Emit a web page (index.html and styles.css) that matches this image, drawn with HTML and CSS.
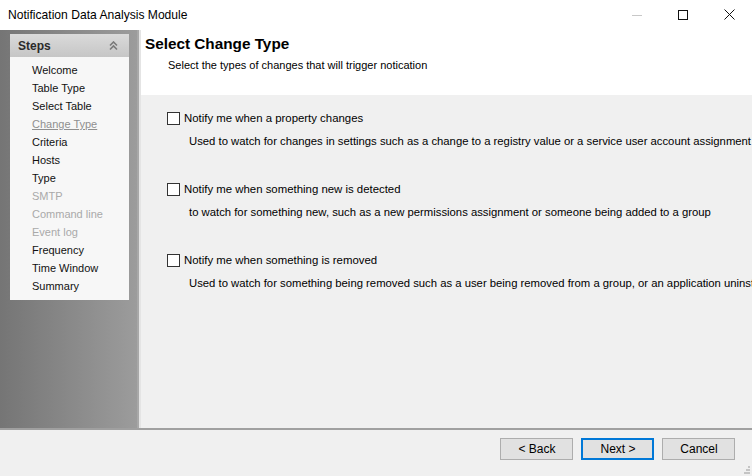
FILE: index.html
```html
<!DOCTYPE html>
<html lang="en">
<head>
  <meta charset="UTF-8" />
  <title>Notification Data Analysis Module</title>
  <link rel="stylesheet" href="styles.css">
</head>
<body>
  <div class="window">
    <div class="titlebar">
      <span class="title">Notification Data Analysis Module</span>
      <div class="controls">
        <span class="ctl"><svg width="10" height="10" viewBox="0 0 10 10"><line x1="0" y1="5.5" x2="10" y2="5.5" stroke="#c8c8c8" stroke-width="1"/></svg></span>
        <span class="ctl"><svg width="10" height="10" viewBox="0 0 10 10"><rect x="0.5" y="0.5" width="9" height="9" fill="none" stroke="#111" stroke-width="1"/></svg></span>
        <span class="ctl"><svg width="11" height="11" viewBox="0 0 11 11"><path d="M0.5 0.5 L10.5 10.5 M10.5 0.5 L0.5 10.5" stroke="#111" stroke-width="1"/></svg></span>
      </div>
    </div>

    <div class="middle">
      <div class="sidebar">
        <div class="steps">
          <div class="steps-head">
            <span>Steps</span>
            <svg width="9" height="10" viewBox="0 0 9 10"><path d="M1 4.5 L4.5 1 L8 4.5 M1 8.5 L4.5 5 L8 8.5" fill="none" stroke="#7a7a7a" stroke-width="1.6"/></svg>
          </div>
          <ul class="step-list">
            <li>Welcome</li>
            <li>Table Type</li>
            <li>Select Table</li>
            <li class="current">Change Type</li>
            <li>Criteria</li>
            <li>Hosts</li>
            <li>Type</li>
            <li class="off">SMTP</li>
            <li class="off">Command line</li>
            <li class="off">Event log</li>
            <li>Frequency</li>
            <li>Time Window</li>
            <li>Summary</li>
          </ul>
        </div>
      </div>

      <div class="main">
        <div class="page-head">
          <h1>Select Change Type</h1>
          <p>Select the types of changes that will trigger notication</p>
        </div>
        <div class="options">
          <div class="option">
            <label><span class="box"></span>Notify me when a property changes</label>
            <p>Used to watch for changes in settings such as a change to a registry value or a service user account assignment</p>
          </div>
          <div class="option">
            <label><span class="box"></span>Notify me when something new is detected</label>
            <p>to watch for something new, such as a new permissions assignment or someone being added to a group</p>
          </div>
          <div class="option">
            <label><span class="box"></span>Notify me when something is removed</label>
            <p>Used to watch for something being removed such as a user being removed from a group, or an application uninstalled</p>
          </div>
        </div>
      </div>
    </div>

    <div class="footer">
      <button>&lt; Back</button>
      <button class="default">Next &gt;</button>
      <button>Cancel</button>
      <svg class="grip" width="6" height="8" viewBox="0 0 6 8">
        <rect x="4" y="0" width="2" height="2" fill="#c4c4c4"/>
        <rect x="2" y="3" width="2" height="2" fill="#c4c4c4"/>
        <rect x="4" y="3" width="2" height="2" fill="#c4c4c4"/>
        <rect x="0" y="6" width="2" height="2" fill="#c4c4c4"/>
        <rect x="2" y="6" width="2" height="2" fill="#c4c4c4"/>
        <rect x="4" y="6" width="2" height="2" fill="#c4c4c4"/>
      </svg>
    </div>
  </div>
</body>
</html>
```

FILE: styles.css
```css
body {
  margin: 0;
  font-family: "Liberation Sans", Arial, sans-serif;
  color: #000;
  background: #f0f0f0;
}
.window {
  width: 752px;
  height: 476px;
  display: flex;
  flex-direction: column;
  overflow: hidden;
}
.titlebar {
  height: 30px;
  flex: none;
  background: #fff;
  display: flex;
  align-items: center;
  justify-content: space-between;
}
.title {
  font-size: 12.1px;
  padding-left: 8px;
  padding-bottom: 1px;
}
.controls {
  display: flex;
  padding-bottom: 1px;
}
.ctl {
  width: 46px;
  height: 30px;
  display: flex;
  align-items: center;
  justify-content: center;
}
.middle {
  flex: 1;
  display: flex;
  min-height: 0;
}
.sidebar {
  flex: none;
  width: 119px;
  background: linear-gradient(to right, #757575, #9c9c9c);
  border-right: 2px solid #a8a8a8;
  padding: 4px 8px 0 10px;
}
.steps {
  width: 119px;
  background: #f7f7f7;
}
.steps-head {
  height: 23px;
  background: linear-gradient(#dadada, #c6c6c6);
  display: flex;
  align-items: center;
  justify-content: space-between;
  padding: 0 11px 0 8px;
  font-size: 12px;
  font-weight: bold;
  color: #2a2a2a;
}
.step-list {
  list-style: none;
  margin: 0;
  padding: 4px 0 5px 22px;
  font-size: 11px;
  color: #111;
}
.step-list li {
  height: 18px;
  line-height: 18px;
}
.step-list li.off {
  color: #a9a9a9;
}
.step-list li.current {
  color: #8f8f8f;
  text-decoration: underline;
}
.main {
  flex: 1;
  display: flex;
  flex-direction: column;
  min-width: 0;
  border-left: 2px solid #e4e4e4;
}
.page-head {
  height: 65px;
  flex: none;
  background: #fff;
  padding-left: 4px;
}
.page-head h1 {
  margin: 0;
  padding-top: 5px;
  font-size: 15.3px;
  font-weight: bold;
  line-height: 17px;
}
.page-head p {
  margin: 7px 0 0 23px;
  font-size: 11px;
}
.options {
  flex: 1;
  padding: 16px 0 0 26px;
  overflow: hidden;
  white-space: nowrap;
}
.option {
  height: 71px;
  font-size: 11.4px;
}
.option label {
  display: flex;
  align-items: center;
  height: 14px;
}
.box {
  width: 11px;
  height: 11px;
  border: 1px solid #333;
  background: #fff;
  margin-right: 4px;
}
.option p {
  margin: 9px 0 0 22px;
  line-height: 14px;
  font-size: 11.3px;
}
.footer {
  flex: none;
  height: 48px;
  box-sizing: border-box;
  border-top: 2px solid #a0a0a0;
  display: flex;
  justify-content: flex-end;
  align-items: flex-start;
  gap: 8px;
  padding: 8px 17px 0 0;
  position: relative;
}
.footer button {
  width: 73px;
  height: 22px;
  font-family: "Liberation Sans", Arial, sans-serif;
  font-size: 12px;
  background: #e1e1e1;
  border: 1px solid #adadad;
  color: #000;
  padding: 0 0 0 1px;
}
.footer button.default {
  border: 2px solid #0078d7;
}
.grip {
  position: absolute;
  right: 2px;
  bottom: 2px;
}
```
